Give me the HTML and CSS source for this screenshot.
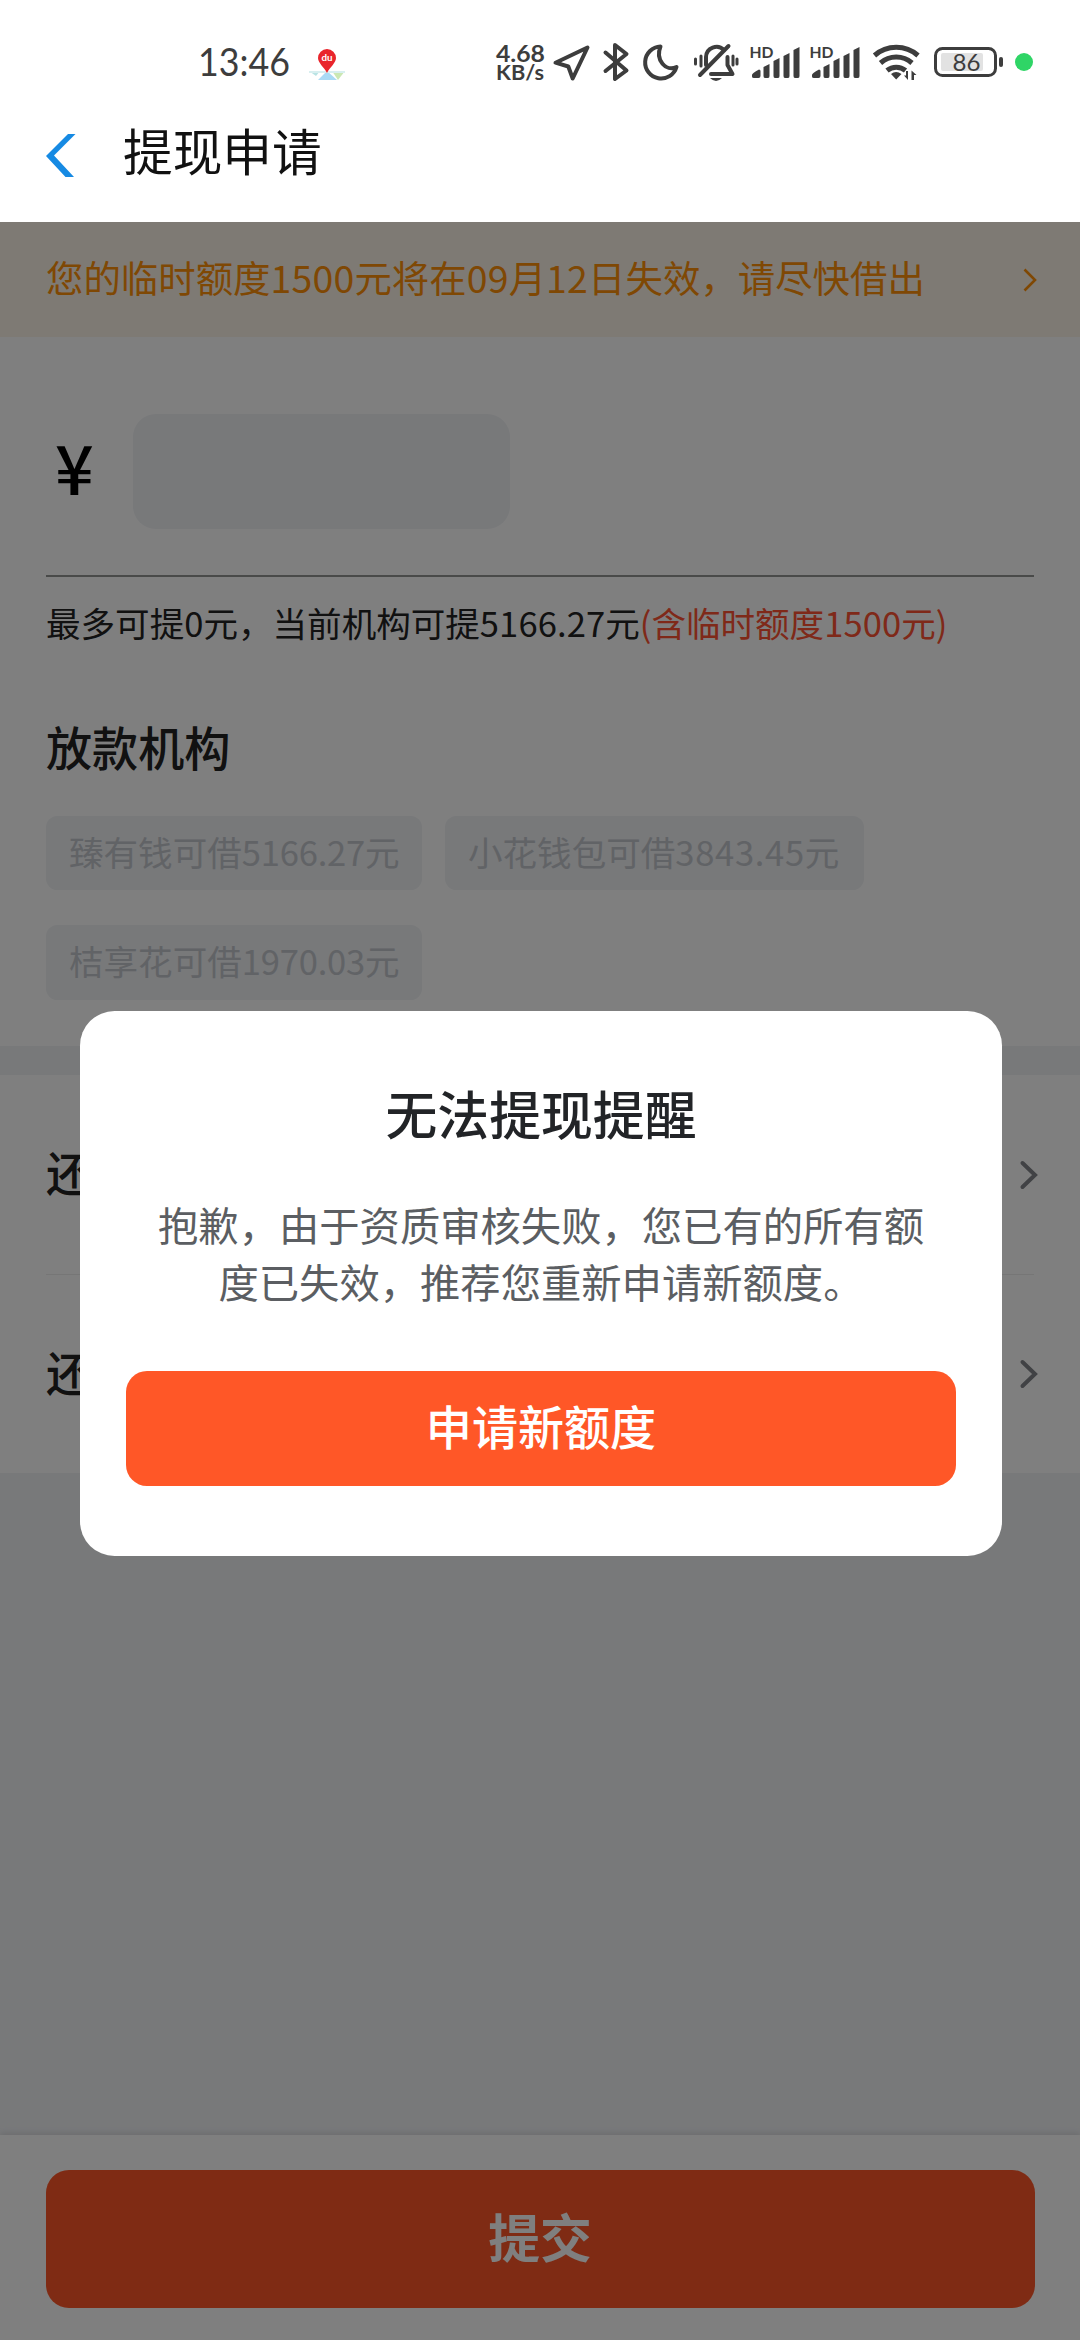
FILE: index.html
```html
<!DOCTYPE html>
<html lang="zh-CN">
<head>
<meta charset="utf-8">
<title>提现申请</title>
<link rel="stylesheet" href="styles.css">
</head>
<body>
<div class="screen">
  <div class="status">
    <svg width="117" height="100" viewBox="190 0 117 100" class="ink"><text x="198" y="76" font-size="39" textLength="92" lengthAdjust="spacingAndGlyphs">13:46</text></svg>
    <svg width="40" height="100" viewBox="307 0 40 100">
      <path d="M309 71h11l-4 5z" fill="#b9e3e4"/><path d="M318 80l9-9 10 9z" fill="#a9daf5"/><path d="M332 71h13l-7 9z" fill="#cbe8b4"/><path d="M309 71h36v2h-36z" fill="#d8eff0"/>
      <path d="M327 73C324 67 318 63 318 58a9 9 0 0 1 18 0C336 63 330 67 327 73z" fill="#e9252c"/>
      <text x="321.500" y="61" font-size="9.500" font-weight="700" fill="#fff" textLength="11" lengthAdjust="spacingAndGlyphs">du</text>
    </svg>
    <span class="gap"></span>
    <svg width="56" height="100" viewBox="494 0 56 100" class="ink bold"><text x="496" y="62" font-size="22" textLength="49" lengthAdjust="spacingAndGlyphs">4.68</text><text x="496" y="80" font-size="20" textLength="48" lengthAdjust="spacingAndGlyphs">KB/s</text></svg>
    <svg width="50" height="100" viewBox="550 0 50 100" class="line"><path d="M555.500 62.700L587.500 47.500 572.700 78.500 568.300 66.500z"/></svg>
    <svg width="36" height="100" viewBox="600 0 36 100" class="line"><path d="M605.500 52.500L626.500 70.500 615 79V45L626.500 54 605.500 71"/></svg>
    <svg width="50" height="100" viewBox="636 0 50 100" class="line"><path d="M660.500 46.500A16 16 0 1 0 676.500 67C666 72 655 60 660.500 46.500z"/></svg>
    <svg width="58" height="100" viewBox="686 0 58 100" class="line">
      <path d="M706 65V57a10.500 10.500 0 0 1 18-7"/><path d="M727.500 57v8l5 9H711"/><path d="M728.500 46L700 75"/><path d="M701 56v10M695.500 59v5M733 56v9M737 59v5" stroke-width="3"/><path d="M710 78h12q-6 6-12 0z" fill="#3d3d3d" stroke="none"/>
    </svg>
    <svg width="60" height="100" viewBox="744 0 60 100" class="ink bold"><text x="749.500" y="58" font-size="15.500" textLength="24" lengthAdjust="spacingAndGlyphs">HD</text>
      <path d="M752 75q0-2 7-5.500 1.500 0 1.500 1.500v5q0 2-2 2h-4.500q-2 0-2-1.500zM763.500 67l6-3v12q0 2-1.500 2h-3q-1.500 0-1.500-2zM773.500 61l6-3v18q0 2-1.500 2h-3q-1.500 0-1.500-2zM783.500 56l6-3v23q0 2-1.500 2h-3q-1.500 0-1.500-2zM793.500 50l6-3v29q0 2-1.500 2h-3q-1.500 0-1.500-2z"/></svg>
    <svg width="60" height="100" viewBox="744 0 60 100" class="ink bold"><text x="749.500" y="58" font-size="15.500" textLength="24" lengthAdjust="spacingAndGlyphs">HD</text>
      <path d="M752 75q0-2 7-5.500 1.500 0 1.500 1.500v5q0 2-2 2h-4.500q-2 0-2-1.500zM763.500 67l6-3v12q0 2-1.500 2h-3q-1.500 0-1.500-2zM773.500 61l6-3v18q0 2-1.500 2h-3q-1.500 0-1.500-2zM783.500 56l6-3v23q0 2-1.500 2h-3q-1.500 0-1.500-2zM793.500 50l6-3v29q0 2-1.500 2h-3q-1.500 0-1.500-2z"/></svg>
    <svg width="64" height="100" viewBox="863 0 64 100">
      <g fill="none" stroke="#3d3d3d" stroke-width="5"><path d="M873.500 55.500a33 33 0 0 1 43.500 0"/><path d="M879.500 63a24 24 0 0 1 31.500 0"/><path d="M886 70.500a14.500 14.500 0 0 1 18.500 0"/></g>
      <path d="M890 74q5-4 10.500 0l-5.300 5.500zM907 71v9l-4-4.500h2V71zM910.500 80v-9.500l5 4.500h-2.500v5z" fill="#3d3d3d"/>
    </svg>
    <svg width="80" height="100" viewBox="927 0 80 100" class="ink">
      <rect x="940" y="53" width="42" height="18" rx="2" fill="#e2e2e2"/><rect x="934.500" y="48.500" width="60" height="27" rx="7" fill="none" stroke="#3d3d3d" stroke-width="3"/><rect x="998" y="57" width="4" height="10" rx="2"/>
      <text x="951.500" y="71" font-size="24" textLength="28" lengthAdjust="spacingAndGlyphs">86</text>
    </svg>
    <i class="dot"></i>
  </div>
  <header class="nav">
    <svg width="34" height="44" viewBox="0 0 34 44"><path d="M22 0h7.500L8 21.500 28 43h-8.500L0 22z" fill="#168ae3"/></svg>
    <h1>提现申请</h1>
  </header>

  <main class="body">
    <div class="notice"><span>您的临时额度<b class="n1">1500</b>元将在<b class="n1">09</b>月<b class="n1">12</b>日失效，请尽快借出</span>
      <svg width="16" height="28" viewBox="0 0 16 28"><path d="M2.500 3.500L13 14 2.500 24.500" fill="none" stroke="#ff9008" stroke-width="2.600"/></svg></div>
    <section class="loan">
      <div class="amount"><span class="yen">¥</span><div class="input"></div></div>
      <p class="hint">最多可提<b class="n2">0</b>元，当前机构可提<b class="n2">5166.27</b>元<em>(含临时额度<b class="n2">1500</b>元)</em></p>
      <h2>放款机构</h2>
      <div class="chips"><span class="c1">臻有钱可借<b>5166.27</b>元</span><span class="c2">小花钱包可借<b>3843.45</b>元</span><span class="c1">桔享花可借<b>1970.03</b>元</span></div>
    </section>
    <section class="rows">
      <div class="row"><span>还</span><svg width="20" height="32" viewBox="0 0 20 32"><path d="M3.500 4L16 16 3.500 28" fill="none" stroke="#82858a" stroke-width="4" stroke-linecap="round"/></svg></div>
      <div class="row"><span>还</span><svg width="20" height="32" viewBox="0 0 20 32"><path d="M3.500 4L16 16 3.500 28" fill="none" stroke="#82858a" stroke-width="4" stroke-linecap="round"/></svg></div>
    </section>
    <footer class="foot"><div class="submit">提交</div></footer>
    <div class="mask">
      <div class="modal">
        <h3>无法提现提醒</h3>
        <p>抱歉，由于资质审核失败，您已有的所有额<br>度已失效，推荐您重新申请新额度。</p>
        <div class="apply">申请新额度</div>
      </div>
    </div>
  </main>
</div>
</body>
</html>
```
FILE: styles.css
```css
* { box-sizing: border-box; margin: 0; padding: 0; }
body { font-family: "Noto Sans CJK SC", sans-serif; color: #222; background: #fff; }
b { font-weight: inherit; }
svg { display: block; flex: none; }
.screen { width: 1080px; height: 2340px; display: flex; flex-direction: column; overflow: hidden; }
.status { height: 100px; display: flex; padding-left: 190px; flex: none; font-family: Lato, sans-serif; }
.status .gap { width: 147px; }
.ink { fill: #3d3d3d; }
.bold { font-weight: 700; }
.line { fill: none; stroke: #3d3d3d; stroke-width: 4; stroke-linejoin: round; stroke-linecap: round; }
.dot { width: 18px; height: 18px; border-radius: 50%; background: #2fd566; margin: 53px 0 0 7px; }
.nav { height: 122px; flex: none; display: flex; align-items: flex-start; padding: 34px 0 0 46px; gap: 43px; }
.nav h1 { font-size: 49.700px; line-height: 56px; font-weight: 400; color: #111; margin-top: -13px; }

.body { flex: 1; position: relative; display: flex; flex-direction: column; background: #f0f2f5; }
.notice { height: 115px; padding: 0 42px 0 46px; display: flex; align-items: center; justify-content: space-between; background: #fdf5e9; color: #ff9008; font-size: 37.440px; }
.notice span { white-space: nowrap; margin-top: -5px; }
.n1 { letter-spacing: .2px; }
.n2 { letter-spacing: .1px; }
.loan { height: 709px; background: #fff; padding: 76.500px 46px 0; }
.amount { height: 163px; border-bottom: 2px solid #929492; display: flex; align-items: flex-start; }
.yen { width: 87px; padding-left: 9px; font-size: 68px; line-height: 103px; font-weight: 500; color: #000; }
.input { width: 377px; height: 115px; border-radius: 23px; background: #f0f2f5; }
.hint { font-size: 34.560px; line-height: 50px; margin-top: 20px; white-space: nowrap; }
.hint em { font-style: normal; color: #ff5233; }
.loan h2 { font-size: 46.080px; line-height: 64px; font-weight: 500; margin-top: 67px; }
.chips { display: flex; flex-wrap: wrap; gap: 34.560px 23px; margin-top: 38px; }
.chips span { height: 74.880px; line-height: 70px; border-radius: 11.500px; background: #f0f2f5; color: #c3c6cc; font-size: 34.560px; padding-left: 23px; white-space: nowrap; }
.chips .c1 { width: 376px; }
.chips .c2 { width: 418.500px; }
.c1 b { letter-spacing: -.2px; }
.c2 b { letter-spacing: .7px; }
.rows { background: #fff; margin-top: 29px; padding: 0 46px; }
.row { height: 199px; display: flex; align-items: center; justify-content: space-between; font-size: 46.080px; font-weight: 500; }
.row + .row { border-top: 1px solid #ececec; }
.row span { margin-top: -7px; }
.row svg { margin-right: -5px; }
.foot { margin-top: auto; height: 205px; background: #fff; padding: 35px 45.500px; box-shadow: 0 -2px 6px rgba(0,0,0,.1); }
.submit { height: 138px; border-radius: 23px; background: #ff5728; color: #fff; font-size: 51.840px; font-weight: 700; text-align: center; line-height: 132px; }
.mask { position: absolute; inset: 0; background: rgba(0,0,0,.5); display: flex; align-items: flex-start; justify-content: center; padding-top: 788.500px; }
.modal { width: 922px; height: 545px; margin-left: 2px; border-radius: 34.560px; background: #fff; padding: 66px 46px 0; text-align: center; }
.modal h3 { font-size: 51.840px; line-height: 72px; font-weight: 500; color: #222427; }
.modal p { font-size: 40.320px; line-height: 57.600px; color: #5b5e62; margin: 46px -20px 0; }
.apply { margin-top: 61px; height: 115px; border-radius: 21px; background: #ff5727; color: #fff; font-size: 46.080px; font-weight: 500; line-height: 109px; }
```
